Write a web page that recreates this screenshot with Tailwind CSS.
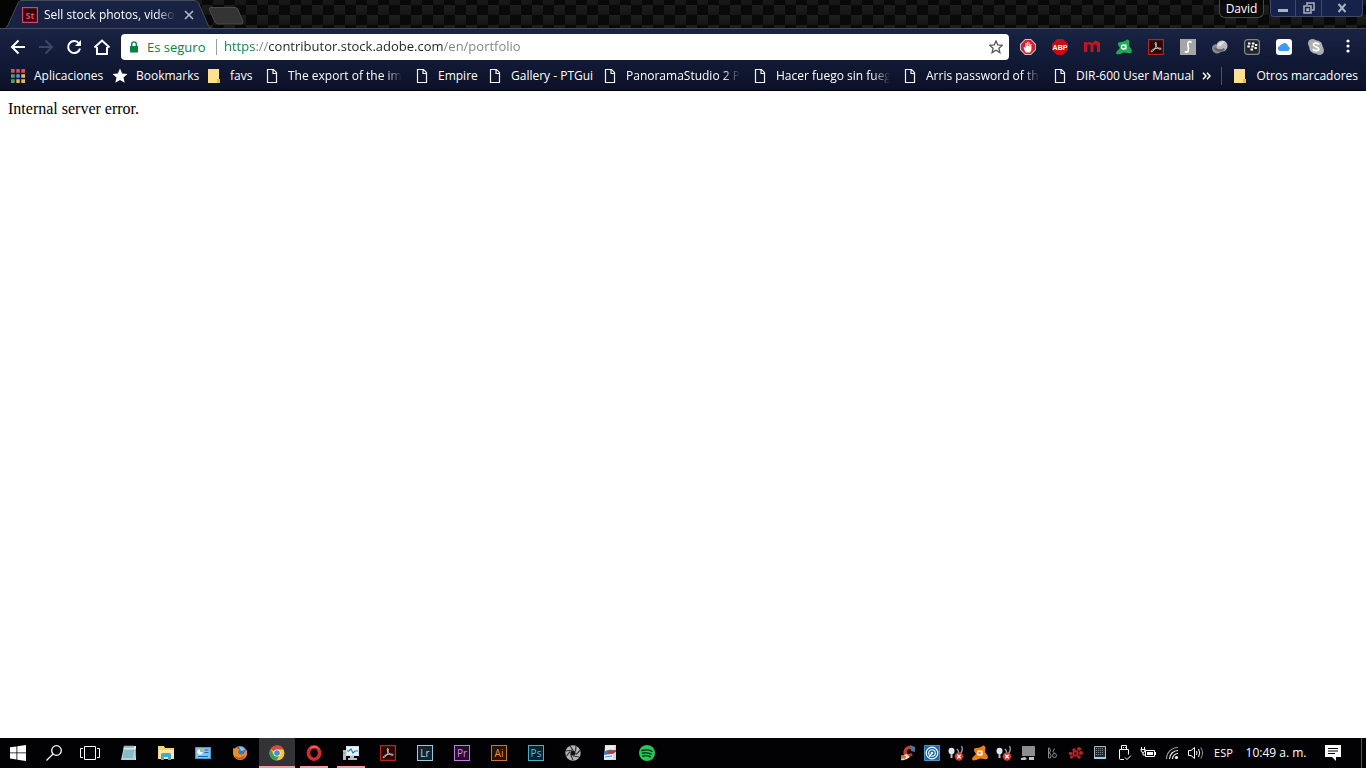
<!DOCTYPE html>
<html lang="es">
<head>
    <meta charset="UTF-8">
    <meta name="viewport" content="width=device-width, initial-scale=1.0">
    <title>Sell stock photos, videos</title>
    <script src="https://cdn.jsdelivr.net/npm/@tailwindcss/browser@4"></script>
</head>
<body class="h-screen flex flex-col overflow-hidden bg-white text-white text-[12px] font-['Open_Sans','Noto_Sans',sans-serif]">

    <!-- Shared icons -->
    <svg class="hidden">
        <symbol id="doc" viewBox="0 0 16 16">
            <path d="M3.5 1.5h6l3 3v10h-9z M9 1.5v4h4" fill="none" stroke="#f4f4f4" stroke-width="1.2"/>
        </symbol>
        <symbol id="folder" viewBox="0 0 16 16">
            <path d="M2 1h11v10h1v4H2z" fill="#fde18e"/>
            <path d="M11 15v-4h3v4z" fill="#e9b94c"/>
        </symbol>
        <symbol id="acrobat" viewBox="0 0 16 16">
            <path d="M.6.6h14.8v14.8H.6z" fill="#2b0708" stroke="#b3261f" stroke-width="1.2"/>
            <path d="M3 12.5c.4-1.5 2.7-2.6 5-3.1 2.5-.5 5-.5 5.2.4.2.9-2.2.6-3.7-.9C8 7.500 6.800 4.800 7.400 3.600c.7-.9 1.300.6.8 2.700-.6 2.500-3.600 7.500-5.200 6.200z" fill="none" stroke="#e6dad8" stroke-width=".9"/>
        </symbol>
        <symbol id="avast" viewBox="0 0 16 16">
            <path d="M5 3Q9 2.500 11 .5 13 0 13.500 3L13 7q3 3 3 6-1 2-4 1l-4-.5q-4 2-7 2-1.500-1-.5-3L4 9Q1.500 6 2 4q1-1.500 3-1z" fill="currentColor"/>
            <circle cx="7.500" cy="8" r="2" fill="none" stroke="#fff" stroke-width="1.400"/>
            <path d="M9.800 5.500v5" stroke="#fff" stroke-width="1.400"/>
        </symbol>
        <symbol id="plug" viewBox="0 0 16 16">
            <ellipse cx="3.500" cy="6" rx="3" ry="3.300" fill="#e3e5e8"/>
            <path d="M2.500 9h2v4h-2z" fill="#b9bcc0"/>
            <path d="M9 4c2 2 2 4 1 6M13.500 1c1.500 3 .5 6-1.500 8" stroke="#a9acb0" stroke-width="1.200" fill="none"/>
            <circle cx="11" cy="11.500" r="4.200" fill="#c8402f"/>
            <path d="M9.300 9.800l3.400 3.400m0-3.400l-3.400 3.400" stroke="#fff" stroke-width="1.300"/>
        </symbol>
    </svg>

    <!-- Tab strip -->
    <header class="relative h-7 shrink-0 flex bg-[#0b0b0b] overflow-hidden">
        <svg class="absolute inset-0 w-full h-full" aria-hidden="true">
            <defs>
                <linearGradient id="weave" x2="0" y2="1"><stop stop-color="#1e1e1e"/><stop offset="1" stop-color="#151515"/></linearGradient>
                <pattern id="carbon" width="22" height="20" patternUnits="userSpaceOnUse" x="15" y="5">
                    <rect width="22" height="20" fill="#090909"/>
                    <rect x="11" width="11" height="10" fill="url(#weave)"/>
                    <rect y="10" width="11" height="10" fill="url(#weave)"/>
                </pattern>
            </defs>
            <rect width="100%" height="100%" fill="url(#carbon)"/>
        </svg>
        <div class="relative w-[208px] h-7 flex items-center pl-[22px] pt-[2px]">
            <svg class="absolute left-0 top-0" width="248" height="28" viewBox="0 0 248 28">
                <defs><linearGradient id="tab" x2="0" y2="1"><stop stop-color="#172244"/><stop offset="1" stop-color="#192443"/></linearGradient></defs>
                <path d="M0 0h20L6 28H0z" fill="#040404"/>
                <path d="M5 28.500Q7 27 8 25L18 3Q19 .5 22 .5H194Q197 .5 198.500 3L208 25Q209 28 212 28.500z" fill="url(#tab)" stroke="#454a57"/>
                <path d="M211 7.500H235Q237 7.500 238 9.500L243 22Q243.500 24 241 24H218Q216 24 215 22L209.500 10Q208.500 7.500 211 7.500z" fill="#343434" stroke="#4b4b4b"/>
            </svg>
            <svg class="relative" width="16" height="16" viewBox="0 0 16 16">
                <path d="M.6.6h14.800v14.800H.6z" fill="#33020c" stroke="#d8456b" stroke-width="1.200"/>
                <text x="8" y="11.500" text-anchor="middle" font-size="9" font-weight="bold" fill="#dc4a72">St</text>
            </svg>
            <span class="relative ml-[6px] w-[132px] overflow-hidden whitespace-nowrap mask-r-from-85% mask-r-to-100%">Sell stock photos, videos, v</span>
            <button class="relative ml-2 size-[10px]" aria-label="Cerrar pestaña">
                <svg viewBox="0 0 10 10"><path d="M1 1l8 8M9 1l-8 8" stroke="#b5bacb" stroke-width="1.600"/></svg>
            </button>
        </div>
        <button class="relative w-10" aria-label="Nueva pestaña"></button>
        <div class="relative ml-auto flex items-start">
            <button class="h-[18px] w-[45px] mr-1.5 rounded-b-md border border-t-0 border-[#484848] bg-[#090909]/80 leading-[18px]">David</button>
            <button class="h-[17px] w-[26px] flex items-center justify-center rounded-bl border border-t-0 border-[#3f4a68] bg-[#16224a]" aria-label="Minimizar">
                <svg width="12" height="12" viewBox="0 0 12 12"><path d="M1 7h10v3H1z" fill="#aab3c4"/></svg>
            </button>
            <button class="h-[17px] w-[25px] flex items-center justify-center border-b border-[#3f4a68] bg-[#16224a]" aria-label="Restaurar">
                <svg width="12" height="12" viewBox="0 0 12 12" fill="none" stroke="#aab3c4" stroke-width="1.500"><path d="M4 3V1h7v7H9M1 4h7v7H1zM4 7h1.500v1.500H4z"/></svg>
            </button>
            <button class="h-[17px] w-[42px] mr-[3px] flex items-center justify-center rounded-br border border-t-0 border-[#3f4a68] bg-[#16224a]" aria-label="Cerrar">
                <svg width="10" height="10" viewBox="0 0 10 10"><path d="M1.500 1l7 8M8.500 1l-7 8" stroke="#aab3c4" stroke-width="2"/></svg>
            </button>
        </div>
    </header>

    <!-- Toolbar and bookmarks -->
    <div class="shrink-0 border-t border-t-[#454c5d] border-b border-b-black bg-linear-to-b from-[#192443] via-[#111a36] to-[#0c1128] pb-1">
        <div class="flex items-center h-9 mb-px pl-1 pr-0.5">
            <button class="w-7 flex justify-center" aria-label="Atrás">
                <svg width="16" height="16" viewBox="0 0 16 16" fill="none" stroke="#fff" stroke-width="2"><path d="M15 8H2M8.500 1.500L2 8l6.500 6.500"/></svg>
            </button>
            <button class="w-7 flex justify-center" aria-label="Adelante">
                <svg width="16" height="16" viewBox="0 0 16 16" fill="none" stroke="#3c4763" stroke-width="2"><path d="M1 8h13M7.500 1.500L14 8l-6.500 6.500"/></svg>
            </button>
            <button class="w-7 flex justify-center" aria-label="Volver a cargar">
                <svg width="16" height="16" viewBox="0 0 16 16"><path d="M13 4.500A6 6 0 1 0 14 9.500" fill="none" stroke="#fff" stroke-width="2"/><path d="M15 1v6H9z" fill="#fff"/></svg>
            </button>
            <button class="w-7 flex justify-center" aria-label="Página principal">
                <svg width="18" height="16" viewBox="0 0 18 16" fill="none" stroke="#fff" stroke-width="2"><path d="M4 8v7h10V8M1.500 8.500L9 1.500l7.500 7"/></svg>
            </button>
            <form class="flex flex-1 items-center h-[26px] ml-[5px] pl-2 pr-[6px] rounded-sm bg-white text-[13px]">
                <svg width="10" height="12" viewBox="0 0 10 12"><path d="M1 5h8v6.500H1z" fill="#0b8043"/><path d="M2.700 5V3.200a2.300 2.300 0 0 1 4.600 0V5" fill="none" stroke="#0b8043" stroke-width="1.400"/></svg>
                <label for="url" class="ml-2 w-[70px] border-r border-gray-400 leading-4 text-[#0b8043]">Es seguro</label>
                <input id="url" type="text" value="https://contributor.stock.adobe.com/en/portfolio" class="flex-1 min-w-0 ml-[7px] outline-none text-transparent bg-clip-text bg-[linear-gradient(to_right,#0b8043_32px,#808080_32px,#808080_44px,#222_44px,#222_219px,#808080_219px)]">
                <button type="button" aria-label="Añadir a marcadores">
                    <svg width="14" height="14" viewBox="0 0 14 14"><path d="M7 1l1.800 4 4.400.4-3.300 2.900 1 4.300L7 10.300l-3.900 2.300 1-4.300L.8 5.400 5.200 5z" fill="none" stroke="#555" stroke-width="1.300"/></svg>
                </button>
            </form>
            <div class="flex ml-[3px]">
                <button class="w-8 flex justify-center" aria-label="AdBlock">
                    <svg width="16" height="16" viewBox="0 0 16 16"><path d="M5 0h6l5 5v6l-5 5H5l-5-5V5z" fill="#c9c4c8"/><path d="M5.400 1h5.200L15 5.400v5.200L10.600 15H5.400L1 10.600V5.400z" fill="#d5202b"/><path d="M5 12.500L3.500 8.500l1-.5L5.500 9V4h1v3h.6V2.800h1.100V7h.6V3.500h1V7.500h.6V5h1v6l-1.300 2.500H6z" fill="#fff"/></svg>
                </button>
                <button class="w-8 flex justify-center" aria-label="Adblock Plus">
                    <svg width="16" height="16" viewBox="0 0 16 16"><path d="M5 0h6l5 5v6l-5 5H5l-5-5V5z" fill="#c70d14"/><text x="8" y="11" text-anchor="middle" font-size="7" font-weight="bold" font-family="Liberation Sans" fill="#fff">ABP</text></svg>
                </button>
                <button class="w-8 flex justify-center" aria-label="Mega">
                    <svg width="16" height="16" viewBox="0 0 16 16"><path d="M0 13V3h3v1q3-2 5.500.3Q11-.5 16 4v9h-3V6.500q-1.800-2-3.500 0V13h-3V6.500q-1.800-2-3.500 0V13z" fill="#c6141d"/></svg>
                </button>
                <button class="w-8 flex justify-center text-[#20a950]" aria-label="Avast"><svg width="16" height="16"><use href="#avast"/></svg></button>
                <button class="w-8 flex justify-center" aria-label="Adobe Acrobat"><svg width="16" height="16"><use href="#acrobat"/></svg></button>
                <button class="w-8 flex justify-center" aria-label="Stylish">
                    <svg width="16" height="16" viewBox="0 0 16 16"><path d="M0 0h16v16H0z" fill="#a5a5a5"/><path d="M11.500 3.500Q10 2 8.300 3.300C6.500 5 9.500 9 8.200 12Q7 14 4.800 12.500" fill="none" stroke="#fff" stroke-width="1.700"/></svg>
                </button>
                <button class="w-8 flex justify-center" aria-label="Download Manager">
                    <svg width="16" height="16" viewBox="0 0 16 16"><path d="M0 9q0-3 4-4l6 7q-3 3-6 2.500Q0 13 0 9z" fill="#878a91"/><circle cx="10" cy="7" r="5.500" fill="#b8bac0"/><path d="M5 6q3-4 8-4l-4 5q-3 1-4-1z" fill="#dedfe2"/><path d="M3 8q4 4 9 1l1 2q-6 4-11-1z" fill="#63666d"/></svg>
                </button>
                <button class="w-8 flex justify-center" aria-label="BlackBerry">
                    <svg width="16" height="16" viewBox="0 0 16 16"><rect x=".6" y=".6" width="14.800" height="14.800" rx="3" fill="#24262b" stroke="#82858d" stroke-width="1.200"/><path d="M4 4.500h2.500M8 4.500h2.500M3.300 7.500h2.500M7.300 7.500h2.500M11 6h2.300M6.500 10.500H9M10.500 9h2.300" stroke="#fff" stroke-width="1.900"/></svg>
                </button>
                <button class="w-8 flex justify-center" aria-label="iCloud">
                    <svg width="16" height="16" viewBox="0 0 16 16"><rect width="16" height="16" rx="3" fill="#fff"/><path d="M4 12a2.500 2.500 0 0 1-.3-4.900A2 2 0 0 1 6 5.500a3.300 3.300 0 0 1 6 1.700A2.500 2.500 0 0 1 12 12z" fill="#3f9bee"/></svg>
                </button>
                <button class="w-8 flex justify-center" aria-label="Skype">
                    <svg width="16" height="16" viewBox="0 0 16 16"><circle cx="4.500" cy="4.500" r="4.500" fill="#aaa"/><circle cx="11.500" cy="11.500" r="4.500" fill="#aaa"/><circle cx="8" cy="8" r="6.800" fill="#b1b1b1"/><path d="M11 5.800C10 3.300 5.300 3.700 5.500 6c.2 2.200 5.300 1.600 5.300 4 0 2.300-5 2.300-5.600-.2" fill="none" stroke="#fff" stroke-width="1.800"/></svg>
                </button>
                <button class="w-8 flex justify-center" aria-label="Menú">
                    <svg width="4" height="14" viewBox="0 0 4 14" fill="#fff"><circle cx="2" cy="2" r="1.600"/><circle cx="2" cy="7" r="1.600"/><circle cx="2" cy="12" r="1.600"/></svg>
                </button>
            </div>
        </div>

        <nav class="flex items-center h-5 pl-[10px] pr-2 whitespace-nowrap">
            <a href="#" class="flex items-center gap-2 shrink-0 w-[102px]">
                <svg width="16" height="16" viewBox="0 0 16 16"><path d="M1 1h4v4H1z M6 1h4v4H6z M11 1h4v4h-4z" fill="#d8524c"/><path d="M1 6h4v4H1z" fill="#48a467"/><path d="M6 6h4v4H6z" fill="#5b8fe0"/><path d="M11 6h4v4h-4z M11 11h4v4h-4z M6 11h4v4H6z" fill="#e9b94b"/><path d="M1 11h4v4H1z" fill="#48a467"/><path d="M5.500 0v16M10.500 0v16M0 5.500h16M0 10.500h16" stroke="#0f1631" stroke-width="1.600"/></svg>
                Aplicaciones
            </a>
            <a href="#" class="flex items-center gap-2 shrink-0 w-[94px]">
                <svg width="16" height="16" viewBox="0 0 16 16"><path d="M8 .5l2.200 4.900 5.300.5-4 3.600 1.200 5.300L8 12l-4.700 2.800 1.200-5.300-4-3.600 5.300-.5z" fill="#fff"/></svg>
                Bookmarks
            </a>
            <a href="#" class="flex items-center gap-2 shrink-0 w-[58px]"><svg width="16" height="16"><use href="#folder"/></svg>favs</a>
            <a href="#" class="flex items-center gap-2 shrink-0 w-[150px]">
                <svg class="shrink-0" width="16" height="16"><use href="#doc"/></svg>
                <span class="w-[114px] overflow-hidden mask-r-from-85% mask-r-to-100%">The export of the image</span>
            </a>
            <a href="#" class="flex items-center gap-2 shrink-0 w-[73px]"><svg width="16" height="16"><use href="#doc"/></svg>Empire</a>
            <a href="#" class="flex items-center gap-2 shrink-0 w-[115px]"><svg width="16" height="16"><use href="#doc"/></svg>Gallery - PTGui</a>
            <a href="#" class="flex items-center gap-2 shrink-0 w-[150px]">
                <svg class="shrink-0" width="16" height="16"><use href="#doc"/></svg>
                <span class="w-[114px] overflow-hidden mask-r-from-85% mask-r-to-100%">PanoramaStudio 2 Pro</span>
            </a>
            <a href="#" class="flex items-center gap-2 shrink-0 w-[150px]">
                <svg class="shrink-0" width="16" height="16"><use href="#doc"/></svg>
                <span class="w-[114px] overflow-hidden mask-r-from-85% mask-r-to-100%">Hacer fuego sin fuego</span>
            </a>
            <a href="#" class="flex items-center gap-2 shrink-0 w-[150px]">
                <svg class="shrink-0" width="16" height="16"><use href="#doc"/></svg>
                <span class="w-[114px] overflow-hidden mask-r-from-85% mask-r-to-100%">Arris password of the day</span>
            </a>
            <a href="#" class="flex items-center gap-2 shrink-0"><svg width="16" height="16"><use href="#doc"/></svg>DIR-600 User Manual</a>
            <button class="ml-auto mr-[10px]" aria-label="Más marcadores">
                <svg width="9" height="8" viewBox="0 0 9 8"><path d="M1 .8L4 4 1 7.200M5 .8L8 4 5 7.200" fill="none" stroke="#fff" stroke-width="1.500"/></svg>
            </button>
            <a href="#" class="flex items-center gap-2 shrink-0 border-l border-[#4a5168] pl-[10px]"><svg width="16" height="16"><use href="#folder"/></svg>Otros marcadores</a>
        </nav>
    </div>

    <!-- Page -->
    <main class="flex-1 p-2 text-black text-[16px] leading-5 font-['Liberation_Serif',serif]">
        <p>Internal server error.</p>
    </main>

    <!-- Taskbar -->
    <footer class="h-[30px] shrink-0 flex bg-[#020204]">
        <div class="flex items-stretch">
            <button class="w-9 flex items-center justify-center" aria-label="Inicio">
                <svg width="16" height="16" viewBox="0 0 16 16" fill="#fff"><path d="M0 2.300l6.500-.9v6.100H0zM7.300 1.300L16 0v7.500H7.300zM0 8.300h6.500v6.200L0 13.600zM7.300 8.300H16V16l-8.700-1.300z"/></svg>
            </button>
            <button class="w-9 flex items-center justify-center" aria-label="Buscar">
                <svg width="16" height="16" viewBox="0 0 16 16" fill="none" stroke="#fff" stroke-width="1.300"><circle cx="10.500" cy="5.500" r="4.800"/><path d="M7 9L.5 15.500"/></svg>
            </button>
            <button class="w-[39px] flex items-center pl-2" aria-label="Vista de tareas">
                <svg width="20" height="14" viewBox="0 0 20 14" fill="none" stroke="#fff"><path d="M4.500.500h11v13h-11zM3 2.500H.500v9H3M17 2.500h2.500v9H17"/></svg>
            </button>
            <button class="w-9 mr-px flex items-center justify-center" aria-label="Bloc de notas">
                <svg width="16" height="16" viewBox="0 0 16 16"><path d="M3 1h12l-1 14H0z" fill="#a9d5dc"/><path d="M3 1h12v3H2.500z" fill="#dce8ea"/><path d="M4 0v3M6 0v3M8 0v3M10 0v3M12 0v3" stroke="#67777c" stroke-width=".8"/><path d="M3 6h10M2.500 8h10M2 10h10M2 12h10" stroke="#609aa9" stroke-width=".9"/><path d="M15 2v13h-1z" fill="#edf4f4"/></svg>
            </button>
            <button class="w-9 mr-px flex items-center justify-center" aria-label="Explorador de archivos">
                <svg width="16" height="16" viewBox="0 0 16 16"><path d="M0 1h6l1 2h9v11H0z" fill="#f4d37a"/><path d="M1 5h15v9H1z" fill="#fbe7a4"/><path d="M3 15V9.500Q3 8 4.500 8h7Q13 8 13 9.500V15h-3v-3H6v3z" fill="#45a9d4"/></svg>
            </button>
            <button class="w-9 mr-px flex items-center justify-center" aria-label="Panel de control">
                <svg width="16" height="16" viewBox="0 0 16 16"><path d="M0 2h16v12H0z" fill="#4697d3"/><path d="M1 3h14v10H1z" fill="#83c2ec"/><circle cx="5" cy="7" r="2.800" fill="#e9f6ff"/><path d="M5 7V4a3 3 0 0 1 3 3z" fill="#e6a43d"/><path d="M9.500 5h4M9.500 7.500h4M3 11.500h10" stroke="#1c67ad" stroke-width="1.200"/></svg>
            </button>
            <button class="w-9 mr-px flex items-center justify-center" aria-label="Firefox">
                <svg width="16" height="16" viewBox="0 0 16 16"><circle cx="8" cy="8" r="7" fill="#e77722"/><circle cx="8.500" cy="6.500" r="5.500" fill="#3878b7"/><path d="M7 2q4-1 6 3l-4 1z" fill="#8ac3e6"/><path d="M1 3q2 1 3 0 2 .5 4 2l-2 1.500q0 3 3 3 3.500 0 4-3L15 5q1 9-7 10Q0 14 1 3z" fill="#ee8c25"/><path d="M3 11q5 4 10-1-1 4-5 4.500-4 0-5-3.500z" fill="#c84b1b"/></svg>
            </button>
            <button class="w-9 mr-px flex items-center justify-center bg-[#333337] border-b-2 border-[#ee9ba0] pt-0.5" aria-label="Google Chrome">
                <svg width="16" height="16" viewBox="0 0 16 16"><circle cx="8" cy="8" r="7.500" fill="#f3c82f"/><path d="M8 8L1.500 4.200A7.500 7.500 0 0 1 14.600 4.500H8z" fill="#d94b3d"/><path d="M1.500 4.200A7.500 7.500 0 0 0 7.500 15.500L10.500 10 8 8 4.800 9.500z" fill="#3c9f57"/><circle cx="8" cy="8" r="3.600" fill="#f5f5f5"/><circle cx="8" cy="8" r="2.800" fill="#4b86dc"/></svg>
            </button>
            <button class="w-7 mx-1 mr-[5px] flex items-center justify-center border-b-2 border-[#ee9ba0] pt-0.5" aria-label="Opera">
                <svg width="16" height="16" viewBox="0 0 16 16"><ellipse cx="8" cy="8" rx="5.600" ry="6.200" fill="none" stroke="#d62a32" stroke-width="3.600"/><path d="M3 4q2-3 5-3 4 0 6 4-3-3-6-2-2 0-5 1z" fill="#ed6a6b"/></svg>
            </button>
            <button class="w-7 mx-1 mr-[5px] flex items-center justify-center border-b-2 border-[#ee9ba0] pt-0.5" aria-label="Monitor de recursos">
                <svg width="16" height="16" viewBox="0 0 16 16"><path d="M3 1h13v10H3z" fill="#d8dde1"/><path d="M4 2h11v8H4z" fill="#e8f7ff"/><path d="M4 6h2l2-2 2 4 2-2h3" fill="none" stroke="#227cb3" stroke-width="1.100"/><path d="M7 11h4v2h3v2H5v-2h2zM0 5h3v10H0z" fill="#b8bec2"/><path d="M1 7v2" stroke="#4da853"/></svg>
            </button>
            <button class="w-9 mr-px flex items-center justify-center" aria-label="Adobe Acrobat"><svg width="16" height="16"><use href="#acrobat"/></svg></button>
            <button class="w-9 mr-px flex items-center justify-center"><span class="size-4 border border-[#9ec7dc] bg-[#14242e] text-[#b4dced] text-[10px] leading-[14px]">Lr</span></button>
            <button class="w-9 mr-px flex items-center justify-center"><span class="size-4 border border-[#c37be0] bg-[#27082f] text-[#d78af3] text-[10px] leading-[14px]">Pr</span></button>
            <button class="w-9 mr-px flex items-center justify-center"><span class="size-4 border border-[#cb7335] bg-[#281204] text-[#ee8b40] text-[10px] leading-[14px]">Ai</span></button>
            <button class="w-9 mr-px flex items-center justify-center"><span class="size-4 border border-[#48abc7] bg-[#042431] text-[#50bfe0] text-[10px] leading-[14px]">Ps</span></button>
            <button class="w-9 mr-px flex items-center justify-center" aria-label="Cámara">
                <svg width="16" height="16" viewBox="0 0 16 16"><circle cx="8" cy="8" r="7.700" fill="#b5b5b5"/><path d="M8 5L5 1M10.500 6.500L11 1M11 9.500l4-4M8 11l6 1M5.500 9.500L8 15M5 6.500L1.500 11M8 5L1 6" stroke="#333" stroke-width="1.200"/><circle cx="8" cy="8" r="2.600" fill="#111"/></svg>
            </button>
            <button class="w-9 mr-px flex items-center justify-center" aria-label="Imágenes">
                <svg width="16" height="16" viewBox="0 0 16 16"><path d="M3 0h11v15H2z" fill="#c7dbea"/><path d="M3 1l10-1-1 5-9 2z" fill="#f1edda"/><path d="M2 7q5-4 12-1l-3 3-9 1z" fill="#3e78b5"/><path d="M5 6l9-1v2L7 9z" fill="#b83b32"/><path d="M2 10l9-1v5l-9 1z" fill="#e7eef4"/><path d="M3 12l7-1" stroke="#4b95c8"/></svg>
            </button>
            <button class="w-9 mr-px flex items-center justify-center" aria-label="Spotify">
                <svg width="16" height="16" viewBox="0 0 16 16"><circle cx="8" cy="8" r="8" fill="#27c75a"/><path d="M3 5.500q5.500-1.500 10 .8M3.500 8.300q4.500-1.200 8.700.8M4 11q4-1 7.300.8" fill="none" stroke="#082511" stroke-width="1.400" stroke-linecap="round"/></svg>
            </button>
        </div>

        <!-- Notification area -->
        <div class="ml-auto flex items-center pr-1">
            <div class="w-6 flex justify-center"><svg width="16" height="16" viewBox="0 0 16 16"><path d="M14 3Q11-1 6 2 2 5 4 10q3 4 9 0l-2-2q-3 2-4 0-1-4 4-4z" fill="#c43a30"/><path d="M10 0l5 2v5l-4-1z" fill="#4d7895"/><path d="M1 15q0-5 6-6l3 3q-4 4-9 3z" fill="#e8d8b8"/><path d="M1 10l5 1-1 3-4-1z" fill="#bd7b38"/></svg></div>
            <div class="w-6 flex justify-center"><svg width="16" height="16" viewBox="0 0 16 16"><path d="M.5.5h15v15H.5z" fill="#1c66a8" stroke="#4794cc"/><circle cx="8" cy="8" r="5.800" fill="none" stroke="#fff" stroke-width="1.200"/><circle cx="8" cy="8" r="3.300" fill="none" stroke="#fff" stroke-width="1.100"/><path d="M8 8l-3 4" stroke="#fff" stroke-width="1.200"/><circle cx="8" cy="8" r="1.200" fill="#fff"/></svg></div>
            <div class="w-6 flex justify-center"><svg width="16" height="16"><use href="#plug"/></svg></div>
            <div class="w-6 flex justify-center text-[#ef7d16]"><svg width="16" height="16"><use href="#avast"/></svg></div>
            <div class="w-6 flex justify-center"><svg width="16" height="16"><use href="#plug"/></svg></div>
            <div class="w-6 flex justify-center"><svg width="16" height="16" viewBox="0 0 16 16"><path d="M2 1h13v10H2z" fill="#8d8d8d"/><path d="M1 13l4-1 2 2-2 1H1zM9 12h5v3H9z" fill="#c4c4c4"/></svg></div>
            <div class="w-6 flex justify-center"><svg width="16" height="16" viewBox="0 0 16 16" fill="none" stroke="#999" stroke-width=".9"><path d="M4.500 3v5h1q2-2.500 0-5zM4.500 8v5h2q1.500-2.500-1-5M10.500 3.500L9 6.500l1.500 1.500"/><circle cx="10.500" cy="10.500" r="2"/></svg></div>
            <div class="w-6 flex justify-center"><svg width="16" height="16" viewBox="0 0 16 16"><g fill="#b5222b"><circle cx="7.500" cy="8.500" r="3.200"/><circle cx="11" cy="4" r="2.100"/><circle cx="6" cy="5" r="1.700"/><circle cx="13" cy="8" r="2"/><circle cx="2.500" cy="8.500" r="1.800"/><circle cx="3.500" cy="12" r="1.700"/><circle cx="11" cy="12" r="1.800"/></g><circle cx="7.500" cy="8.500" r="1.200" fill="#310408"/></svg></div>
            <div class="w-6 flex justify-center"><svg width="16" height="16" viewBox="0 0 16 16"><path d="M2.500 1.500h11v12h-11z" fill="#25292d" stroke="#aeb8c0"/><path d="M4 3.500h8M4 5.500h8M4 7.500h8M4 9.500h8" stroke="#7d858b" stroke-dasharray="1 1"/><path d="M2 12h12v2H2z" fill="#9bd4ee"/></svg></div>
            <div class="w-6 flex justify-center"><svg width="16" height="16" viewBox="0 0 16 16" fill="none" stroke="#fff"><path d="M5.500.500h5v4h-5zM8 14.500H4.500q-1 0-1-1v-9h9v5M9 12.500l2 2 4-4M7 2.500h.8M9 2.500h.8"/></svg></div>
            <div class="w-6 flex justify-center"><svg width="16" height="16" viewBox="0 0 16 16"><path d="M5.500 5.500h9v6h-9z" fill="#000" stroke="#fff"/><path d="M7 7h6v3H7zM15 7h1v3h-1z" fill="#fff"/><path d="M1.500 2v2M4.500 2v2M.5 4.500h5M1 5q0 2.500 2 2.500T5 5M3 7.500V10h2.500" stroke="#fff" fill="none"/></svg></div>
            <div class="w-6 flex justify-center"><svg width="16" height="16" viewBox="0 0 16 16" fill="none" stroke-width="1.200"><path d="M2.500 14A11.500 11.500 0 0 1 14 2.500" stroke="#999"/><path d="M5.500 14A8.500 8.500 0 0 1 14 5.500M8.500 14A5.500 5.500 0 0 1 14 8.500" stroke="#eee"/><circle cx="12.500" cy="12.500" r="1.600" fill="#fff"/></svg></div>
            <div class="w-6 flex justify-center"><svg width="16" height="16" viewBox="0 0 16 16" fill="none" stroke="#fff"><path d="M.5 5.500H3l3.500-3v11l-3.500-3H.5zM8.500 6q1 2 0 4M10.500 4q2.500 4 0 8"/><path d="M12.800 2.500q3.500 5.500 0 11" stroke="#999"/></svg></div>
            <button class="w-[31px] text-center text-[11px]">ESP</button>
            <time class="w-[74px] text-center">10:49 a. m.</time>
            <button class="w-[40px] flex justify-center mr-2" aria-label="Notificaciones">
                <svg width="16" height="16" viewBox="0 0 16 16"><path d="M0 0h16v12h-5v4l-4-4H0z" fill="#fff"/><path d="M3 3.500h10M3 6h10M3 8.500h7" stroke="#050505"/></svg>
            </button>
            <div class="self-stretch border-l border-[#555]"></div>
        </div>
    </footer>

</body>
</html>
